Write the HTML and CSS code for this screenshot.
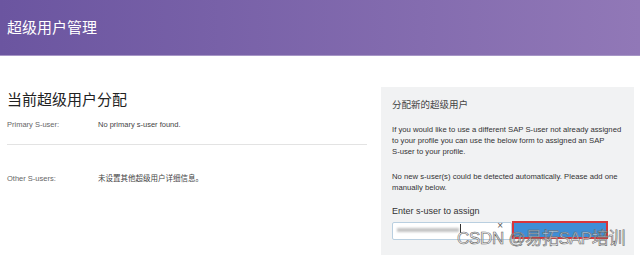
FILE: index.html
```html
<!DOCTYPE html>
<html lang="zh-CN">
<head>
  <meta charset="UTF-8">
  <title>超级用户管理</title>
  <link rel="stylesheet" href="styles.css">
</head>
<body>

  <div class="header">
    <h1>超级用户管理</h1>
  </div>

  <div class="main">
    <div class="current">
      <h2>当前超级用户分配</h2>
      <div class="row">
        <span class="label">Primary S-user:</span>
        <span class="value">No primary s-user found.</span>
      </div>
      <div class="row other">
        <span class="label">Other S-users:</span>
        <span class="value">未设置其他超级用户详细信息。</span>
      </div>
    </div>

    <div class="assign">
      <h3>分配新的超级用户</h3>
      <p>If you would like to use a different SAP S-user not already assigned to your profile you can use the below form to assigned an SAP <span class="nw">S-user</span> to your profile.</p>
      <p>No new s-user(s) could be detected automatically. Please add one manually below.</p>
      <label for="suser">Enter s-user to assign</label>
      <div class="assign-form">
        <div class="input-wrap">
          <input type="text" id="suser">
          <span class="blur"></span>
          <span class="caret"></span>
          <span class="clear">×</span>
        </div>
        <button type="button" class="btn"></button>
      </div>
    </div>
  </div>

  <div class="watermark">CSDN @易拓SAP培训</div>

</body>
</html>
```

FILE: styles.css
```css
body {
  margin: 0;
  font-family: "Liberation Sans", "Noto Sans CJK SC", sans-serif;
  background: #fff;
  height: 256px;
  overflow: hidden;
  position: relative;
}
.header {
  height: 55px;
  background: linear-gradient(to right, #6b55a0, #9178b7);
  border-bottom: 1px solid #a796c6;
  display: flex;
  align-items: center;
  padding-left: 7px;
}
.header h1 {
  margin: 0;
  font-family: "Noto Sans CJK SC", sans-serif;
  font-weight: normal;
  font-size: 15px;
  color: #fff;
  position: relative;
  top: -1px;
}
.main {
  display: flex;
  padding-top: 31px;
}
.current {
  width: 360px;
  padding-left: 7px;
}
.current h2 {
  margin: 0;
  font-family: "Noto Sans CJK SC", sans-serif;
  font-weight: normal;
  font-size: 15px;
  color: #222;
  line-height: 24px;
}
.row {
  display: flex;
  font-size: 7.5px;
  line-height: 12px;
  padding: 8px 0 13px;
  border-bottom: 1px solid #e3e3e3;
}
.row.other {
  border-bottom: none;
  padding-top: 28px;
}
.label {
  width: 91px;
  color: #666;
}
.value {
  color: #444;
}
.assign {
  margin-left: 14px;
  width: 253px;
  height: 168px;
  background: #f1f2f3;
  padding: 9px 11px 0;
  box-sizing: border-box;
}
.assign h3 {
  margin: 0 0 12px;
  font-family: "Noto Sans CJK SC", sans-serif;
  font-weight: normal;
  font-size: 9.5px;
  line-height: 16px;
  color: #444;
}
.assign p {
  margin: 0 0 14px;
  font-size: 7.7px;
  line-height: 11px;
  color: #333;
}
.nw {
  white-space: nowrap;
}
.assign label {
  display: block;
  font-size: 9px;
  line-height: 12px;
  color: #333;
  margin-top: -2px;
}
.assign-form {
  display: flex;
  margin-top: 4px;
  height: 18px;
}
.input-wrap {
  position: relative;
  width: 120px;
}
.input-wrap input {
  width: 100%;
  height: 18px;
  box-sizing: border-box;
  border: 1px solid #b9cfe0;
  border-radius: 2px;
  background: #fff;
  margin: 0;
}
.blur {
  position: absolute;
  left: 5px;
  top: 7px;
  width: 62px;
  height: 4px;
  background: #c4c4c4;
  filter: blur(1px);
}
.caret {
  position: absolute;
  left: 68px;
  top: 3px;
  width: 1px;
  height: 9px;
  background: #333;
}
.clear {
  position: absolute;
  right: 9px;
  top: -1px;
  font-size: 10px;
  color: #555;
}
.btn {
  width: 96px;
  height: 18px;
  background: #3e8ed6;
  border: 2px solid #d8353a;
  padding: 0;
  margin: 0;
}
.watermark {
  position: absolute;
  left: 457px;
  top: 224px;
  font-size: 17px;
  color: rgba(255, 255, 255, 0.55);
  -webkit-text-stroke: 0.6px #666;
  letter-spacing: -0.3px;
}
```
